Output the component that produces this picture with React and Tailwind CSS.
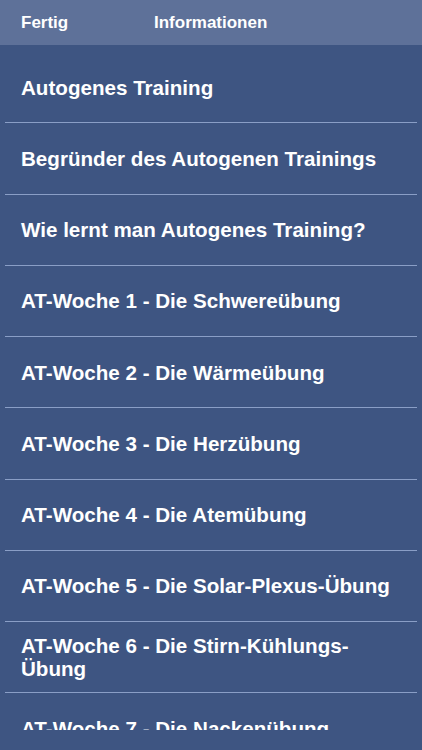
import React from "react";

const items = [
  "Autogenes Training",
  "Begründer des Autogenen Trainings",
  "Wie lernt man Autogenes Training?",
  "AT-Woche 1 - Die Schwereübung",
  "AT-Woche 2 - Die Wärmeübung",
  "AT-Woche 3 - Die Herzübung",
  "AT-Woche 4 - Die Atemübung",
  "AT-Woche 5 - Die Solar-Plexus-Übung",
  "AT-Woche 6 - Die Stirn-Kühlungs-Übung",
  "AT-Woche 7 - Die Nackenübung",
];

export default function App() {
  return (
    <div
      className="w-[422px] h-[750px] bg-[#3e5582] text-white overflow-hidden flex flex-col"
      style={{ fontFamily: '"Liberation Sans", Arial, sans-serif' }}
    >
      <header className="h-[45px] shrink-0 bg-[#5e7199] flex items-center px-[21px] text-[17px] font-bold">
        <span className="w-[133px]">Fertig</span>
        <span>Informationen</span>
      </header>
      <div className="h-[685px] shrink-0 overflow-hidden pt-[7px]">
        {items.map((t) => (
          <div
            key={t}
            className="h-[71.25px] mx-[5px] border-b border-[#8a9ec6] flex items-center pl-[16px] pr-[20px]"
          >
            <span className="text-[20.6px] font-bold leading-[23px]">{t}</span>
          </div>
        ))}
      </div>
    </div>
  );
}
